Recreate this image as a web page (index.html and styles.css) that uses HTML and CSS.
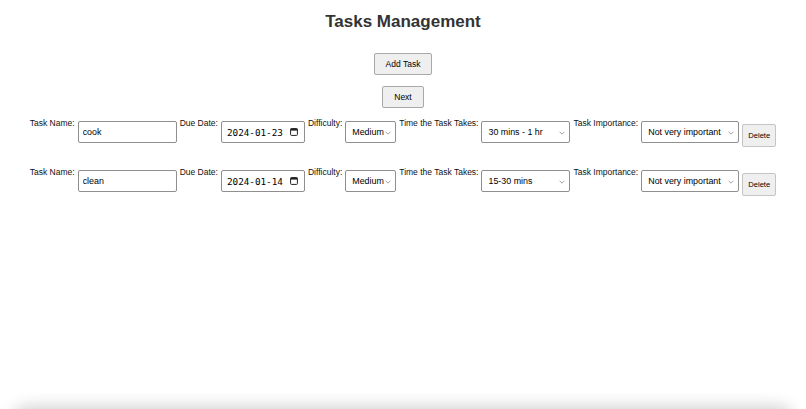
FILE: index.html
```html
<!DOCTYPE html>
<html lang="en">
<head>
<meta charset="utf-8">
<title>Tasks Management</title>
<link rel="stylesheet" href="styles.css">
</head>
<body>
<div class="page">
  <h1 class="title">Tasks Management</h1>
  <div class="actions">
    <button class="btn btn-add">Add Task</button>
    <button class="btn btn-next">Next</button>
  </div>
  <div class="tasks">
    <div class="task">
      <span class="lbl">Task Name:</span>
      <input class="field name" type="text" value="cook">
      <span class="lbl">Due Date:</span>
      <span class="field date"><span class="date-text">2024-01-23</span><svg class="cal" width="8" height="8" viewBox="0 0 8 8"><rect x="0.6" y="0.6" width="6.8" height="6.8" rx="0.8" fill="none" stroke="#222" stroke-width="1"/><rect x="0.6" y="0.6" width="6.8" height="2" fill="#222"/></svg></span>
      <span class="lbl">Difficulty:</span>
      <span class="sel-wrap"><select class="field sel diff"><option>Medium</option></select><svg class="chev" width="6" height="4" viewBox="0 0 6 4"><path d="M0.6 0.8 L3 3.2 L5.4 0.8" fill="none" stroke="#8a8a8a" stroke-width="0.8"/></svg></span>
      <span class="lbl">Time the Task Takes:</span>
      <span class="sel-wrap"><select class="field sel time"><option>30 mins - 1 hr</option></select><svg class="chev" width="6" height="4" viewBox="0 0 6 4"><path d="M0.6 0.8 L3 3.2 L5.4 0.8" fill="none" stroke="#8a8a8a" stroke-width="0.8"/></svg></span>
      <span class="lbl">Task Importance:</span>
      <span class="sel-wrap"><select class="field sel imp"><option>Not very important</option></select><svg class="chev" width="6" height="4" viewBox="0 0 6 4"><path d="M0.6 0.8 L3 3.2 L5.4 0.8" fill="none" stroke="#8a8a8a" stroke-width="0.8"/></svg></span>
      <button class="btn btn-del">Delete</button>
    </div>
    <div class="task">
      <span class="lbl">Task Name:</span>
      <input class="field name" type="text" value="clean">
      <span class="lbl">Due Date:</span>
      <span class="field date"><span class="date-text">2024-01-14</span><svg class="cal" width="8" height="8" viewBox="0 0 8 8"><rect x="0.6" y="0.6" width="6.8" height="6.8" rx="0.8" fill="none" stroke="#222" stroke-width="1"/><rect x="0.6" y="0.6" width="6.8" height="2" fill="#222"/></svg></span>
      <span class="lbl">Difficulty:</span>
      <span class="sel-wrap"><select class="field sel diff"><option>Medium</option></select><svg class="chev" width="6" height="4" viewBox="0 0 6 4"><path d="M0.6 0.8 L3 3.2 L5.4 0.8" fill="none" stroke="#8a8a8a" stroke-width="0.8"/></svg></span>
      <span class="lbl">Time the Task Takes:</span>
      <span class="sel-wrap"><select class="field sel time"><option>15-30 mins</option></select><svg class="chev" width="6" height="4" viewBox="0 0 6 4"><path d="M0.6 0.8 L3 3.2 L5.4 0.8" fill="none" stroke="#8a8a8a" stroke-width="0.8"/></svg></span>
      <span class="lbl">Task Importance:</span>
      <span class="sel-wrap"><select class="field sel imp"><option>Not very important</option></select><svg class="chev" width="6" height="4" viewBox="0 0 6 4"><path d="M0.6 0.8 L3 3.2 L5.4 0.8" fill="none" stroke="#8a8a8a" stroke-width="0.8"/></svg></span>
      <button class="btn btn-del">Delete</button>
    </div>
  </div>
</div>
<div class="bottom-shade"></div>
</body>
</html>
```
FILE: styles.css
```css
html, body {
  margin: 0;
  padding: 0;
  background: #fff;
  overflow: hidden;
}
body {
  font-family: "Liberation Sans", Arial, sans-serif;
  color: #000;
  width: 806px;
  height: 409px;
}
.page {
  padding-top: 12px;
}
.title {
  margin: 0;
  font-size: 17px;
  line-height: 20px;
  font-weight: bold;
  text-align: center;
  color: #333;
}
.actions {
  display: flex;
  flex-direction: column;
  align-items: center;
  gap: 11px;
  margin-top: 21px;
}
.btn {
  font-family: "Liberation Sans", Arial, sans-serif;
  background: #efefef;
  border: 1px solid #a9a9a9;
  border-radius: 2px;
  color: #000;
  padding: 0;
  margin: 0;
  box-sizing: border-box;
}
.btn-add {
  width: 58px;
  height: 22px;
  font-size: 8.5px;
}
.btn-next {
  width: 42px;
  height: 22px;
  font-size: 8.5px;
}
.tasks {
  margin-top: 10px;
  display: flex;
  flex-direction: column;
  gap: 20px;
}
.task {
  display: flex;
  justify-content: center;
  align-items: flex-start;
  gap: 3px;
  height: 29px;
}
.lbl {
  font-size: 8.5px;
  line-height: 10px;
  white-space: nowrap;
  color: #111;
}
.field {
  box-sizing: border-box;
  height: 22px;
  margin: 3px 0 0;
  border: 1px solid #8f8f8f;
  border-radius: 2px;
  background: #fff;
  font-family: "Liberation Sans", Arial, sans-serif;
  font-size: 8.9px;
  color: #000;
  outline: none;
}
.name {
  width: 99px;
  padding: 0 0 0 4px;
}
.date {
  width: 84px;
  display: flex;
  align-items: center;
  justify-content: space-between;
  padding: 0 6px 0 5px;
}
.date-text {
  font-family: "DejaVu Sans Mono", "Liberation Mono", monospace;
  font-size: 9.3px;
  letter-spacing: 0;
}
.cal {
  display: block;
}
.sel-wrap {
  position: relative;
  display: block;
}
.sel {
  appearance: none;
  -webkit-appearance: none;
  padding: 0 0 0 6px;
  margin-top: 3px;
}
.diff { width: 51px; }
.time { width: 89px; }
.imp { width: 98px; }
.chev {
  position: absolute;
  right: 5px;
  top: 13px;
  display: block;
}
.btn-del {
  width: 34px;
  height: 23px;
  font-size: 7.6px;
  margin-top: 6px;
  border-color: #c4c4c4;
}
.bottom-shade {
  position: fixed;
  left: 14px;
  right: 14px;
  top: 409px;
  height: 30px;
  border-radius: 20px;
  box-shadow: 0 0 16px 3px rgba(0, 0, 0, 0.18);
}
```
